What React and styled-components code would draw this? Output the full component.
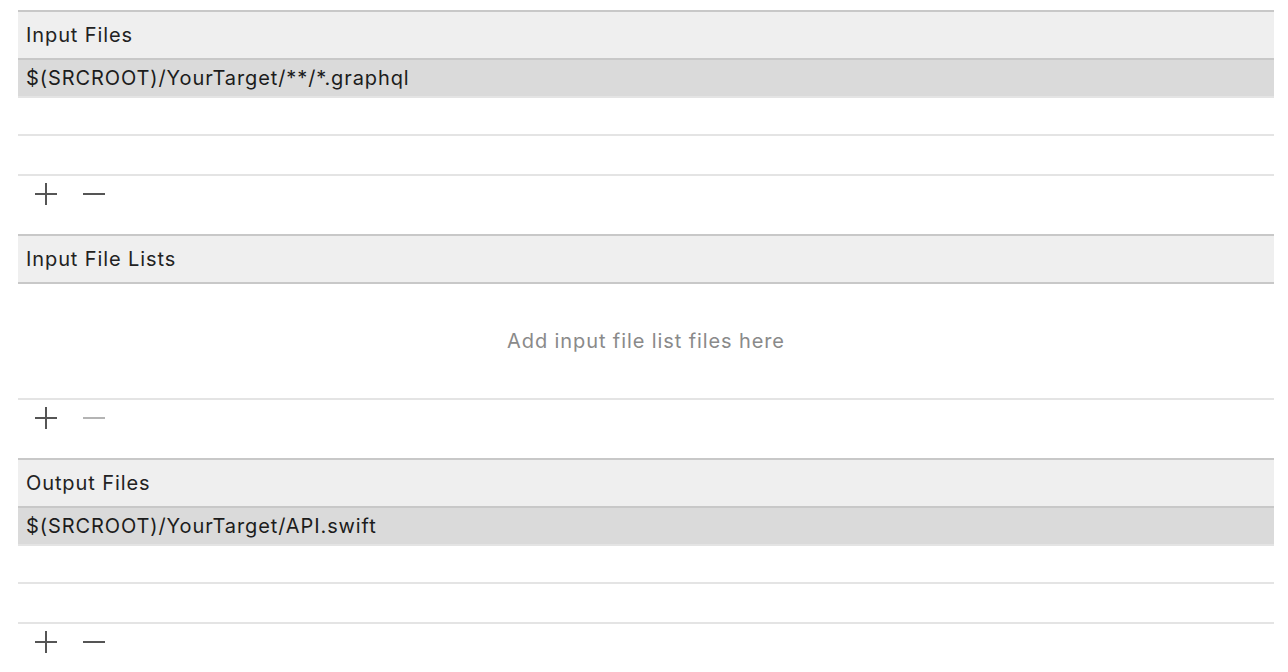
import React from 'react';
import styled, { createGlobalStyle } from 'styled-components';

const GlobalStyle = createGlobalStyle`
  *, *::before, *::after {
    box-sizing: border-box;
  }
  html, body {
    margin: 0;
    padding: 0;
    background: #ffffff;
  }
  body {
    font-family: Inter, "Noto Sans", "Liberation Sans", sans-serif;
    -webkit-font-smoothing: antialiased;
  }
`;

const Page = styled.div`
  padding: 10px 14px 0 18px;
  display: flex;
  flex-direction: column;
`;

const Section = styled.section`
  display: flex;
  flex-direction: column;
`;

const Text = `
  font-size: 20px;
  letter-spacing: 0.9px;
`;

const Header = styled.div`
  height: 50px;
  display: flex;
  align-items: center;
  padding-left: 8px;
  background: #efefef;
  border-top: 2px solid #c8c8c8;
  border-bottom: 2px solid #c8c8c8;
  color: #222222;
  ${Text}
`;

const List = styled.div`
  height: 114px;
  display: flex;
  flex-direction: column;
`;

const Row = styled.div`
  height: 38px;
  flex-shrink: 0;
  display: flex;
  align-items: center;
  padding-left: 8px;
  border-bottom: 2px solid #e4e4e4;
  background: ${p => (p.$selected ? '#dadada' : '#ffffff')};
  color: #1c1c1c;
  ${Text}
`;

const Empty = styled.div`
  height: 114px;
  display: flex;
  align-items: center;
  justify-content: center;
  color: #8a8a8a;
  ${Text}
`;

const Toolbar = styled.div`
  height: 60px;
  display: flex;
  align-items: flex-start;
  gap: 26px;
  padding: 7px 0 0 17px;
  border-top: 2px solid #e4e4e4;
`;

const IconButton = styled.button`
  width: 22px;
  height: 22px;
  padding: 0;
  border: none;
  background: none;
  display: flex;
  color: ${p => (p.disabled ? '#b4b4b4' : '#555555')};
`;

const Plus = () => (
  <svg width="22" height="22" viewBox="0 0 22 22">
    <path d="M0 11h22M11 0v22" stroke="currentColor" strokeWidth="2" />
  </svg>
);

const Minus = () => (
  <svg width="22" height="22" viewBox="0 0 22 22">
    <path d="M0 11h22" stroke="currentColor" strokeWidth="2" />
  </svg>
);

const sections = [
  { title: 'Input Files', files: ['$(SRCROOT)/YourTarget/**/*.graphql'] },
  { title: 'Input File Lists', files: [], placeholder: 'Add input file list files here' },
  { title: 'Output Files', files: ['$(SRCROOT)/YourTarget/API.swift'] },
];

const FileSection = ({ title, files, placeholder }) => {
  const filler = Math.max(0, 2 - files.length);
  return (
    <Section>
      <Header>{title}</Header>
      {files.length ? (
        <List>
          {files.map((f, i) => (
            <Row key={f} $selected={i === 0}>{f}</Row>
          ))}
          {Array.from({ length: filler }).map((_, i) => (
            <Row key={'e' + i} />
          ))}
        </List>
      ) : (
        <Empty>{placeholder}</Empty>
      )}
      <Toolbar>
        <IconButton aria-label="Add"><Plus /></IconButton>
        <IconButton aria-label="Remove" disabled={!files.length}><Minus /></IconButton>
      </Toolbar>
    </Section>
  );
};

const App = () => (
  <>
    <GlobalStyle />
    <Page>
      {sections.map(s => (
        <FileSection key={s.title} {...s} />
      ))}
    </Page>
  </>
);

export default App;
